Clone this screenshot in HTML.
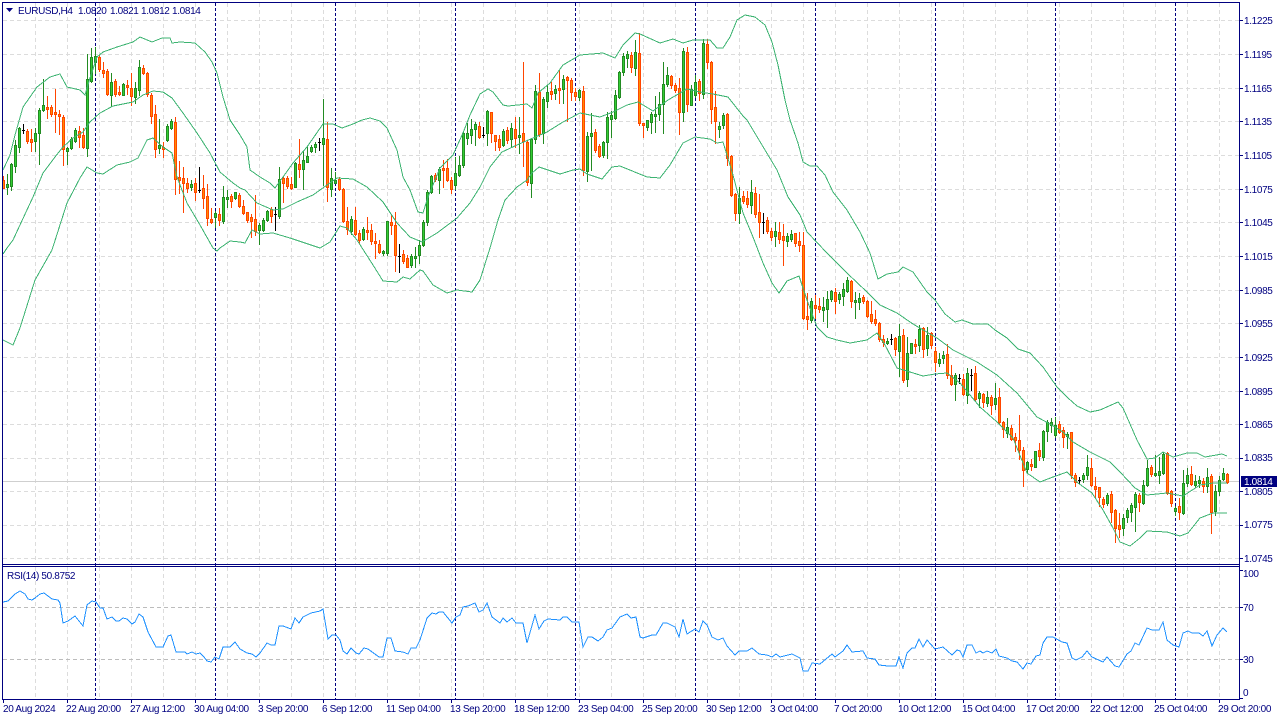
<!DOCTYPE html>
<html><head><meta charset="utf-8"><title>EURUSD,H4</title>
<style>
html,body{margin:0;padding:0;background:#fff;width:1280px;height:720px;overflow:hidden}
svg{display:block;position:absolute;left:0;top:0}
text{font-family:"Liberation Sans",sans-serif;font-size:10px;fill:#000080;letter-spacing:-.35px}
</style></head><body>
<svg id="c" width="1280" height="720" viewBox="0 0 1280 720" xmlns="http://www.w3.org/2000/svg">
<rect width="1280" height="720" fill="#fff"/>
<g shape-rendering="crispEdges" fill="none">
<path id="vg" stroke="#dcdcdc" stroke-dasharray="4 3" d="M35.5 3V564M67.5 3V564M99.5 3V564M131.5 3V564M163.5 3V564M195.5 3V564M227.5 3V564M259.5 3V564M291.5 3V564M323.5 3V564M355.5 3V564M387.5 3V564M419.5 3V564M451.5 3V564M483.5 3V564M515.5 3V564M547.5 3V564M579.5 3V564M611.5 3V564M643.5 3V564M675.5 3V564M707.5 3V564M739.5 3V564M771.5 3V564M803.5 3V564M835.5 3V564M867.5 3V564M899.5 3V564M931.5 3V564M963.5 3V564M995.5 3V564M1027.5 3V564M1059.5 3V564M1091.5 3V564M1123.5 3V564M1155.5 3V564M1187.5 3V564M1219.5 3V564
M35.5 567V699M67.5 567V699M99.5 567V699M131.5 567V699M163.5 567V699M195.5 567V699M227.5 567V699M259.5 567V699M291.5 567V699M323.5 567V699M355.5 567V699M387.5 567V699M419.5 567V699M451.5 567V699M483.5 567V699M515.5 567V699M547.5 567V699M579.5 567V699M611.5 567V699M643.5 567V699M675.5 567V699M707.5 567V699M739.5 567V699M771.5 567V699M803.5 567V699M835.5 567V699M867.5 567V699M899.5 567V699M931.5 567V699M963.5 567V699M995.5 567V699M1027.5 567V699M1059.5 567V699M1091.5 567V699M1123.5 567V699M1155.5 567V699M1187.5 567V699M1219.5 567V699"/>
<path stroke="#dcdcdc" stroke-dasharray="4 3" d="M3 20.5H1239M3 54.5H1239M3 88.5H1239M3 121.5H1239M3 155.5H1239M3 189.5H1239M3 222.5H1239M3 256.5H1239M3 290.5H1239M3 323.5H1239M3 357.5H1239M3 391.5H1239M3 424.5H1239M3 458.5H1239M3 491.5H1239M3 525.5H1239M3 558.5H1239"/>
<path stroke="#bcbcbc" stroke-dasharray="4 3" d="M3 607.5H1239M3 659.5H1239"/>
<path stroke="#cfcfcf" d="M3 481.5H1239"/>
<path stroke="#000080" stroke-dasharray="3 2" d="M95.5 3V699M215.5 3V699M335.5 3V699M455.5 3V699M575.5 3V699M695.5 3V699M815.5 3V699M935.5 3V699M1055.5 3V699M1175.5 3V699"/>
</g>
<g id="candles" shape-rendering="crispEdges" fill="none"></g>
<g fill="none" stroke="#3CB371" stroke-width="1" shape-rendering="crispEdges">
<polyline points="3,170 10,155 15,135 23,107 37,87 50,77 60,74 67,87 80,90 85,95 90,78 97,57 103,52 117,47 133,42 140,37 152,42 162,38 170,38 172,43 180,42 195,43 205,52 212,62 217,73 223,97 230,120 240,135 247,147 250,170 260,177 270,183 275,188 283,177 293,163 307,147 323,124 333,124 342,128 353,124 362,120 370,118 380,121 387,128 397,150 403,177 410,190 418,212 423,213 428,197 440,168 453,155 463,133 470,115 480,94 488,89 493,92 503,105 508,106 527,104 532,108 538,93 550,83 563,65 580,55 603,53 615,58 623,45 635,33 640,34 660,43 673,39 683,43 693,40 710,40 717,48 723,48 730,37 737,20 745,15 755,17 765,25 772,42 778,65 785,100 790,120 798,143 803,162 810,166 817,166 825,175 833,192 847,210 860,232 870,253 878,279 887,274 898,272 903,267 913,272 927,292 935,300 945,314 955,322 962,320 973,324 988,324 995,330 1007,338 1018,349 1030,353 1043,367 1057,387 1068,398 1077,406 1090,412 1100,410 1118,402 1123,408 1137,440 1147,459 1155,458 1163,452 1173,457 1187,453 1197,453 1205,457 1222,454 1227,456"/>
<polyline points="3,254 7,248 13,240 33,197 43,173 55,157 63,147 73,138 83,132 90,122 100,113 113,106 133,102 143,95 153,91 163,92 172,98 183,113 197,133 210,153 220,172 233,183 240,188 245,190 257,203 273,210 283,209 297,202 313,195 327,185 337,178 353,179 367,187 383,202 397,223 410,237 422,242 437,233 457,218 470,203 480,187 490,167 502,152 517,145 533,138 547,132 563,122 580,113 600,117 613,112 627,105 638,102 653,111 668,100 687,89 700,92 713,94 728,97 743,116 747,120 762,145 777,170 788,197 800,215 807,232 827,253 847,273 867,292 880,305 897,313 913,324 937,338 953,350 977,362 997,375 1017,393 1037,417 1050,424 1063,432 1073,442 1090,452 1110,462 1120,472 1135,488 1147,495 1167,493 1183,496 1200,485 1213,483 1227,483"/>
<polyline points="3,340 13,345 20,328 35,280 52,250 67,203 80,178 87,167 97,173 103,174 117,165 130,162 138,158 147,140 153,138 163,147 172,153 177,177 187,203 200,225 213,248 217,251 220,248 230,241 240,242 245,243 252,230 260,234 273,233 290,238 320,248 330,242 340,226 347,228 357,240 373,265 383,281 397,282 403,277 410,279 420,270 423,271 433,285 447,293 457,290 472,292 480,280 490,248 498,220 505,200 517,187 527,180 532,173 539,167 560,174 573,170 580,169 587,174 602,179 612,167 620,166 647,177 660,178 670,165 683,143 695,137 710,139 717,143 723,142 733,175 743,213 753,237 763,263 772,283 779,293 787,281 799,276 807,300 817,327 827,337 837,340 850,343 867,340 877,333 885,345 897,368 910,372 923,376 935,374 947,373 960,383 980,407 997,422 1013,438 1027,473 1040,482 1053,477 1067,472 1078,483 1092,493 1103,510 1113,528 1120,542 1130,546 1140,538 1147,531 1167,532 1180,536 1188,533 1200,518 1213,513 1227,513"/>
</g>
<polyline fill="none" stroke="#1E90FF" stroke-width="1" shape-rendering="crispEdges" points="3,602 8,601 15,594 20,591 25,594 28,599 32,600 35,598 40,594 44,593 52,599 58,600 60,603 63,623 68,621 75,616 83,626 87,605 92,601 96,602 100,608 103,608 107,619 112,617 116,621 119,621 123,618 127,619 132,624 135,622 139,614 143,617 148,632 156,647 163,647 168,636 171,635 176,652 185,652 187,654 192,652 196,654 200,653 204,657 207,661 211,662 215,657 219,659 223,647 230,647 235,642 240,649 247,653 252,654 256,657 260,653 267,643 271,645 275,645 279,626 283,626 291,629 295,618 299,623 303,617 311,613 320,611 323,609 328,639 332,635 336,635 340,640 343,651 347,654 351,648 356,653 359,654 364,648 368,649 379,657 383,657 387,638 391,638 395,651 403,652 408,654 411,648 416,648 420,640 427,618 432,613 436,614 439,612 443,612 452,623 456,617 460,615 463,607 468,606 475,603 479,612 483,610 487,603 492,617 500,623 503,618 507,622 512,618 516,623 523,623 527,643 535,615 539,629 544,621 548,619 560,620 563,617 567,617 572,622 579,622 583,647 588,637 592,637 598,641 603,637 607,630 612,628 620,617 627,614 631,618 636,617 640,637 643,638 652,635 656,635 663,623 667,623 675,627 679,637 683,619 687,634 695,629 699,632 703,621 707,625 712,637 718,640 723,638 727,646 735,655 739,651 747,651 752,648 759,654 767,655 772,657 776,654 780,657 792,654 800,658 803,671 808,671 812,663 820,664 832,654 835,657 843,651 847,645 852,652 863,651 867,658 875,659 879,665 888,666 896,666 899,657 903,668 907,653 912,648 915,648 919,639 923,647 927,640 935,649 943,647 952,655 957,650 960,651 963,657 967,645 972,645 976,653 980,651 983,653 987,651 992,653 996,649 999,656 1007,658 1012,661 1017,662 1023,669 1027,663 1031,664 1036,656 1040,655 1043,643 1047,637 1053,637 1062,642 1067,643 1072,658 1076,660 1082,657 1087,651 1092,657 1103,662 1107,657 1115,666 1119,667 1127,654 1131,651 1135,643 1139,645 1147,628 1152,630 1159,630 1163,622 1167,640 1173,645 1179,647 1183,633 1188,631 1192,633 1199,633 1203,636 1207,631 1212,646 1217,635 1223,628 1227,632"/>
<g shape-rendering="crispEdges" fill="none" stroke="#000080">
<path d="M2.5 2V700M1239.5 2V700M2 2.5H1240M2 564.5H1240M2 566.5H1240M2 699.5H1240"/>
<path d="M1239 20.5h4M1239 54.5h4M1239 88.5h4M1239 121.5h4M1239 155.5h4M1239 189.5h4M1239 222.5h4M1239 256.5h4M1239 290.5h4M1239 323.5h4M1239 357.5h4M1239 391.5h4M1239 424.5h4M1239 458.5h4M1239 491.5h4M1239 525.5h4M1239 558.5h4M1239 570.5h4M1239 607.5h4M1239 659.5h4M1239 698.5h4"/>
<path d="M3.5 699v4M67.5 699v4M131.5 699v4M195.5 699v4M259.5 699v4M323.5 699v4M387.5 699v4M451.5 699v4M515.5 699v4M579.5 699v4M643.5 699v4M707.5 699v4M771.5 699v4M835.5 699v4M899.5 699v4M963.5 699v4M1027.5 699v4M1091.5 699v4M1155.5 699v4M1219.5 699v4"/>
</g>
<path d="M6 8h7l-3.5 4z" fill="#000080"/>
<text x="18" y="14">EURUSD,H4</text><text x="78" y="14">1.0820</text><text x="110" y="14">1.0821</text><text x="141" y="14">1.0812</text><text x="172" y="14">1.0814</text>
<text x="7" y="579">RSI(14) 50.8752</text>
<g>
<text x="1244" y="24">1.1225</text><text x="1244" y="58">1.1195</text><text x="1244" y="92">1.1165</text><text x="1244" y="125">1.1135</text><text x="1244" y="159">1.1105</text><text x="1244" y="193">1.1075</text><text x="1244" y="226">1.1045</text><text x="1244" y="260">1.1015</text><text x="1244" y="294">1.0985</text><text x="1244" y="327">1.0955</text><text x="1244" y="361">1.0925</text><text x="1244" y="395">1.0895</text><text x="1244" y="428">1.0865</text><text x="1244" y="461">1.0835</text><text x="1244" y="495">1.0805</text><text x="1244" y="528">1.0775</text><text x="1244" y="562">1.0745</text>
<text x="1243" y="577">100</text><text x="1243" y="611">70</text><text x="1243" y="663">30</text><text x="1243" y="696">0</text>
</g>
<rect x="1241" y="476" width="36" height="11" fill="#000080"/>
<text x="1244" y="485" style="fill:#fff">1.0814</text>
<g>
<text x="3" y="712">20 Aug 2024</text><text x="66" y="712">22 Aug 20:00</text><text x="130" y="712">27 Aug 12:00</text><text x="194" y="712">30 Aug 04:00</text><text x="258" y="712">3 Sep 20:00</text><text x="322" y="712">6 Sep 12:00</text><text x="386" y="712">11 Sep 04:00</text><text x="450" y="712">13 Sep 20:00</text><text x="514" y="712">18 Sep 12:00</text><text x="578" y="712">23 Sep 04:00</text><text x="642" y="712">25 Sep 20:00</text><text x="706" y="712">30 Sep 12:00</text><text x="770" y="712">3 Oct 04:00</text><text x="834" y="712">7 Oct 20:00</text><text x="898" y="712">10 Oct 12:00</text><text x="962" y="712">15 Oct 04:00</text><text x="1026" y="712">17 Oct 20:00</text><text x="1090" y="712">22 Oct 12:00</text><text x="1154" y="712">25 Oct 04:00</text><text x="1218" y="712">29 Oct 20:00</text>
</g>
</svg>
<script>
var D="r176 180 188 188;g174 184 187 194;g163 164 186 190;g140 145 166 172;g127 128 147 152;k124 130 130 133;r129 131 141 143;r129 139 142 151;g128 133 141 151;g108 110 133 164;g79 105 110 111;r96 107 109 118;r105 107 114 116;r89 112 114 132;r110 114 116 134;r115 117 149 165;g147 148 151 164;g137 139 148 149;g128 130 141 142;r126 131 137 147;r128 135 147 148;g54 79 148 156;g48 57 81 82;g47 56 62 73;r55 57 69 71;r62 70 73 77;r69 71 94 95;g73 82 95 106;r79 81 94 96;r86 92 94 95;g83 84 95 95;r80 85 87 94;r73 88 96 105;g82 88 97 103;g60 67 90 95;r65 68 73 74;r72 73 94 96;r93 95 116 123;r105 114 149 157;g119 145 148 153;r142 147 149 157;g124 126 140 141;g119 121 128 129;r117 122 179 194;r161 177 180 193;r167 178 183 212;r178 183 188 192;g180 184 187 190;r178 183 192 200;k167 190 190 192;r175 188 198 208;r184 196 218 225;r208 219 222 223;g211 213 217 227;r208 214 220 225;g186 197 221 223;g190 197 199 207;r194 196 201 207;g192 192 198 199;r193 195 206 207;r200 206 213 214;r212 212 220 222;r214 217 221 237;r195 219 231 235;g223 225 230 244;g218 220 230 231;g210 211 220 221;r207 209 216 222;k207 214 214 230;g167 179 216 218;r177 178 183 202;r176 178 186 188;r177 184 188 189;g162 163 187 187;r139 164 169 177;g151 160 169 189;g147 156 162 162;g145 147 151 152;g142 144 147 152;k138 142 142 150;g99 138 144 185;r122 139 187 201;g168 178 189 196;g172 180 183 183;r177 179 189 190;r188 189 221 222;r207 221 229 234;g216 219 231 234;r207 220 234 235;r230 233 240 243;g227 229 239 240;r217 230 232 239;r224 230 241 244;r233 241 243 258;r240 244 252 253;g250 251 253 255;g221 221 253 255;r215 222 225 234;r212 225 255 271;k244 256 256 272;r250 254 261 263;r255 258 267 267;g254 256 265 267;g247 256 258 267;g240 245 255 263;g220 222 245 246;g190 192 222 225;g175 176 192 193;r173 175 179 181;g167 169 180 193;r160 168 170 187;r159 168 180 181;r177 180 189 193;g157 173 185 189;g156 165 175 176;g132 133 165 167;g123 133 138 144;g119 129 135 143;g122 124 129 145;r122 126 137 138;k127 135 135 137;g110 111 133 145;r112 112 133 142;r135 135 141 150;r135 139 147 150;g129 131 145 146;r127 130 140 143;g123 128 139 146;r117 129 138 147;g117 135 137 153;r62 133 141 166;r140 142 182 185;g138 139 183 197;g85 91 139 143;r73 92 134 136;g97 99 133 143;g85 92 101 107;r82 91 94 99;g85 89 93 99;r70 88 90 103;g75 79 89 103;r76 77 80 121;r78 80 92 100;r88 92 96 100;g89 90 97 100;r86 91 170 175;g132 136 171 181;g113 133 136 170;r129 132 150 152;r144 146 156 157;g141 142 155 157;g112 117 142 158;g111 115 119 137;g90 95 118 119;g71 72 97 98;g53 56 72 75;g51 54 58 67;r52 55 67 72;g40 52 68 75;r33 53 123 125;r123 123 125 137;g120 120 127 130;g112 114 122 133;g96 114 116 132;g92 104 114 120;g62 84 104 133;g67 75 84 86;r75 76 85 88;r83 85 90 92;r78 88 112 134;g48 51 112 121;r47 52 104 111;g85 89 105 105;g75 82 95 97;r79 81 93 100;g39 43 94 98;r39 44 62 68;r61 62 109 123;r91 107 121 143;g122 126 129 137;g113 115 125 128;r113 114 158 165;r155 156 195 196;r193 194 213 220;g187 198 213 223;r191 196 201 203;r191 198 204 207;g180 192 205 213;r187 193 214 217;r194 212 222 237;k213 222 222 233;r217 220 231 233;r228 231 237 240;g222 231 236 246;r222 232 239 243;r224 236 240 265;g233 236 241 246;g230 234 239 241;r233 233 243 246;r232 241 245 251;r232 245 318 319;r293 316 319 329;g298 301 320 322;r295 305 308 318;r298 306 309 312;g297 307 310 321;g291 299 309 327;g290 291 299 301;r288 292 301 313;g292 294 299 303;g283 289 296 305;g277 280 291 292;r280 281 301 307;g292 300 302 318;g293 298 302 309;r295 297 301 303;r300 301 316 317;r301 314 321 323;r310 319 323 325;r322 323 339 341;r335 339 342 346;g338 341 343 344;k334 339 339 344;r337 338 349 355;g324 336 351 376;r329 335 380 382;g337 353 379 386;g343 343 353 353;r339 344 346 353;g325 329 345 351;r327 328 349 357;g327 335 348 355;r332 333 345 348;r347 351 362 371;g353 359 363 366;g351 355 358 363;r344 354 375 378;r365 375 384 385;g373 375 384 400;k374 378 378 383;r374 379 394 395;g368 373 395 403;k369 375 375 390;r366 373 399 400;g391 393 398 407;r393 394 402 407;g391 397 403 406;r395 397 405 414;g383 398 404 409;r388 397 422 423;r421 422 429 437;g418 427 433 437;r425 428 439 440;r433 437 440 451;r415 440 450 459;r447 450 470 486;g461 462 469 473;r459 464 466 470;g451 451 467 467;r443 450 456 460;g430 431 457 460;g420 422 431 441;g418 422 425 432;g417 425 435 437;r421 424 432 433;r427 430 437 447;g432 434 436 448;r432 432 475 478;r473 475 482 486;k477 480 480 483;g473 475 479 482;g455 467 475 479;r458 468 485 486;r477 486 489 498;r487 487 497 506;r497 499 504 507;g493 495 503 505;r491 494 512 522;r509 510 528 542;r513 525 529 537;g514 518 528 535;g508 510 517 522;g503 505 512 521;g492 494 507 531;r493 495 502 511;g480 485 503 504;g460 468 485 486;r465 467 474 476;g455 473 475 476;g457 471 475 483;g452 454 473 474;r452 453 493 494;r490 491 503 506;g506 508 511 515;r498 506 512 519;g470 483 513 514;g468 475 483 486;r466 474 484 485;g475 481 485 487;g476 480 483 487;r478 481 486 492;g468 477 486 492;r474 476 512 533;g485 491 511 515;g476 480 491 495;g468 473 479 480;r473 474 482 483".split(";");
var W={g:"",r:"",k:""},B={g:"",r:""},I={g:"",r:""};
D.forEach(function(s,i){var c=s[0],a=s.slice(1).split(" ").map(Number),x=3.5+4*i;
W[c]+="M"+x+" "+a[0]+"V"+(a[3]+1);
if(c==="k"){W.k+="M"+(x-1.5)+" "+(a[1]+.5)+"h3";}
else{B[c]+="M"+x+" "+a[1]+"V"+(a[2]+1);I[c]+="M"+x+" "+(a[1]+1)+"V"+a[2];}});
var h='<path stroke="#228B22" d="'+W.g+'"/><path stroke="#FF4500" d="'+W.r+'"/><path stroke="#000" d="'+W.k+'"/>'
+'<path stroke="#228B22" stroke-width="3" d="'+B.g+'"/><path stroke="#FF4500" stroke-width="3" d="'+B.r+'"/>'
+'<path stroke="#32CD32" d="'+I.g+'"/><path stroke="#FF8C00" d="'+I.r+'"/>';
document.getElementById("candles").innerHTML=h;
</script>
</body></html>
